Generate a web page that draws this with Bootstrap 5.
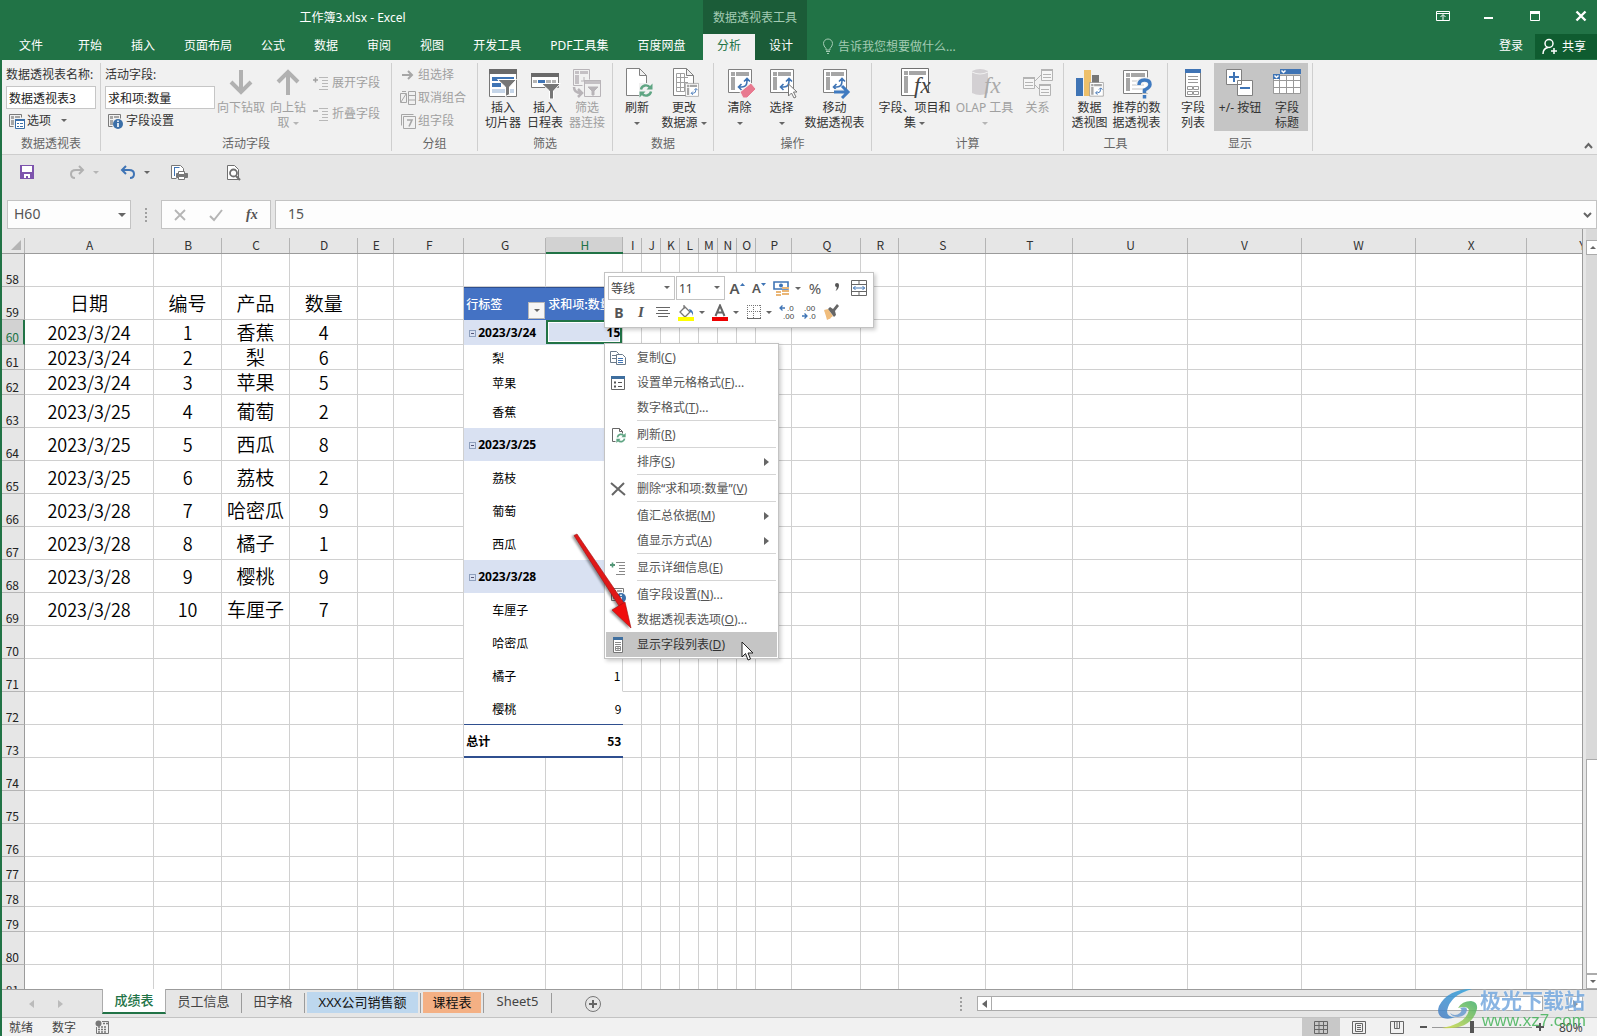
<!DOCTYPE html>
<html lang="zh-CN">
<head>
<meta charset="utf-8">
<meta name="viewport" content="width=device-width, initial-scale=1">
<title>工作簿3.xlsx - Excel</title>
<link href="https://cdn.jsdelivr.net/npm/bootstrap@5.3.0/dist/css/bootstrap.min.css" rel="stylesheet">
<style>
:root{--green:#217346;--dark:#1b5c38;--bar:#e6e6e6;--ribbon:#f1f1f1;--line:#d0d0d0}
body{font-family:"Noto Sans","Noto Sans CJK SC",sans-serif;font-size:12px;line-height:15px;color:#444;background:var(--bar)}
button{font:inherit;color:inherit;border:0;background:none;padding:0}
svg{display:block;flex:none}
.app{height:100vh;border-left:2px solid var(--green);overflow:hidden}
.caret{display:inline-block;border:3px solid transparent;border-top-color:#666;border-bottom:0;flex:none;vertical-align:middle}
/* title bar and ribbon tabs */
.topbar{height:60px;background:var(--green);color:#fff}
.title-row{height:34px}
.tab-row{height:26px}
.rtab{color:#fff;text-decoration:none;padding:4px 15px 0 14px;display:block;white-space:nowrap}
.rtab.file{padding:4px 21px 0 17px}
.main-tabs{width:701px}
.tool-tabs{width:104px;background:var(--dark)}
.tool-tabs .title-row{color:#a3cbb3}
.tool-tabs .rtab{padding:4px 0 0;flex:1;text-align:center}
.tool-tabs .rtab.active{background:var(--ribbon);color:var(--green)}
.tell{color:#a3cbb3;padding-left:15px}
.win{gap:14px}
.win button{width:32px;height:32px}
.share{background:#0f5c30;height:25px;width:62px;gap:4px;padding-left:7px;align-self:flex-start}
/* ribbon */
.ribbon{height:95px;background:var(--ribbon);border-bottom:1px solid #cdcdcd;padding-top:3px}
.grp{position:relative;height:88px;border-right:1px solid #cfcfcf;background-clip:padding-box}
.grp-body{height:68px}
.grp-name{height:20px;padding-top:5px;text-align:center;color:#666}
.big{height:68px;padding-top:3px;line-height:15px;white-space:nowrap;color:#333;text-align:center;flex:none}
.big svg{margin:0 auto 1px}
.big.off,.sml.off{color:#a0a0a0}
.off .caret{border-top-color:#b5b5b5}
.big.on{background:#c5c5c5}
.w42{width:42px}.w52{width:52px}.w64{width:64px}.w76{width:76px}
.sml{display:flex;align-items:center;gap:2px;height:23px;white-space:nowrap;color:#333}
.rb-in{height:23px;border:1px solid #c6c6c6;background:#fff;font-size:12px;padding:0 2px;margin-top:1px;color:#222;display:block}
.rb-name{width:90px}.rb-field{width:110px}
.rb-lab{height:22px;display:flex;align-items:center;white-space:nowrap;color:#333}
.rb-opt{padding-left:2px}
.g1{width:99px}.g2{width:291px}.g3{width:86px}.g4{width:135px}.g5{width:101px}.g6{width:158px}.g7{width:192px}.g8{width:104px}.g9{width:145px}
/* quick access and formula bar */
.qat{height:45px;padding:0 0 11px 17px}
.gap-a{margin-right:34px}.gap-b{margin-right:21px}.gap-c{margin-right:38px}
.fbar{height:29px}
.fbox{height:29px;background:#fdfdfd;border:1px solid #c3c3c3}
.fbox input{border:0;background:none;font-size:14px;line-height:20px;color:#555;min-width:0;padding:0 0 1px;outline:0}
.namebox{width:124px;margin-left:5px;padding:0 4px 0 6px}
.fxbox{width:110px;margin-left:14px}
.dots{width:2px;height:14px;margin-left:14px;background:repeating-linear-gradient(#a0a0a0 0 2px,transparent 2px 4px)}
/* worksheet */
.sheet{border-right:1px solid #9b9b9b;overflow:hidden;background:#fff;min-width:0}
.grid{table-layout:fixed;border-collapse:separate;border-spacing:0;width:1636px;color:#000;font-family:"Noto Sans CJK SC",sans-serif}
.grid th,.grid td{padding:0;white-space:nowrap;font-weight:400}
.grid thead th{height:25px;padding-top:8px;text-align:center;color:#333;border-bottom:1px solid #9b9b9b;background:linear-gradient(#b4b4b4,#b4b4b4) right bottom/1px 15px no-repeat var(--bar);line-height:14px}
.grid thead th.sel{background:linear-gradient(#b4b4b4,#b4b4b4) right bottom/1px 15px no-repeat,linear-gradient(#d2d2d2,#d2d2d2) right bottom/100% 15px no-repeat var(--bar);color:var(--green);border-bottom:2px solid var(--green)}
.grid thead th:first-child{padding:0 4px 3px 0;vertical-align:bottom}
.grid tbody th{background:var(--bar);border-right:1px solid #9b9b9b;border-bottom:1px solid #b4b4b4;vertical-align:bottom;text-align:right;padding-right:5px;line-height:14px;color:#222}
.grid tbody th.sel{background:#d2d2d2;color:var(--green);border-right:2px solid var(--green);padding-right:4px}
.grid td{border-right:1px solid var(--line);border-bottom:1px solid var(--line);text-align:center;vertical-align:middle;line-height:24px;font-size:18px;font-weight:350}
.h33{height:33px}.h25{height:25px}
.grid td.zh{font-size:19px}
.grid td.pv{font-size:12px;line-height:15px;border-color:#fff;text-align:left;font-weight:400}
.grid td.pv.rt{text-align:right;padding-right:2px;border-right-color:var(--line)}
.grid td.item{padding-left:28px}
.grid td.sum{background:#d9e1f2;border-bottom-color:#d9e1f2;border-right-color:#d9e1f2;font-weight:700;font-family:"Noto Sans","Noto Sans CJK SC",sans-serif;padding-left:5px}
.grid td.tot{border-bottom:2px solid #2f4f8f;border-right:0;padding-left:2px;font-weight:700}
.grid td.pretot{border-bottom-color:#2f4f8f;border-right:0}
.grid td.hd{background:#4472c4;border-color:#4472c4;border-top:1px solid #2f4f8f;color:#fff;padding-left:2px;font-weight:500;position:relative}
.grid td.pick{box-shadow:inset 0 0 0 2px var(--green),inset 0 0 0 3px #fff}
.exp{display:inline-block;width:7px;height:7px;border:1px solid #8fa0bd;background:linear-gradient(#557,#557) center/3px 1px no-repeat;margin-right:2px}
.drop{position:absolute;right:0;bottom:0;width:17px;height:17px;background:#f6f6f6;border:1px solid #b8b8b8;display:flex;align-items:center;justify-content:center}
/* scroll bars */
.vscroll{width:14px;padding:11px 0 0 3px;background:linear-gradient(90deg,var(--bar) 3px,#d9d9d9 3px)}
.sb{background:#fff;border:1px solid #ababab;display:flex;align-items:center;justify-content:center;flex:none}
.vscroll .sb{height:15px;margin-right:-3px}
.vscroll .vthumb{height:215px}
.up,.left{transform:rotate(180deg)}
/* mini toolbar and context menu */
.float-box{position:absolute;left:602px;background:#fff;border:1px solid #c3c3c3;box-shadow:2px 2px 4px rgba(0,0,0,.2)}
.mini{top:43px;width:270px;height:56px;padding:3px}
.mini button{width:22px;height:24px;display:flex;align-items:center;justify-content:center;font-size:15px;color:#555}
.mini button.split{width:34px;gap:5px}
.combo{position:relative;height:24px}
.combo select{appearance:none;width:100%;height:24px;border:1px solid #c3c3c3;background:#fff;font-size:12px;color:#444;padding:0 2px;border-radius:0;display:block}
.combo .caret{position:absolute;right:5px;top:10px;pointer-events:none}
.c-font{width:67px;margin-right:1px}.c-size{width:49px;margin-right:1px}
.i-bold{font-size:14px}
.i-ital{font:italic 700 15px "Liberation Serif",serif}
.ctx{top:114px;width:175px;padding:1px}
.ctx button{display:flex;align-items:center;width:100%;height:25px;padding:0 8px 0 4px;color:#555;text-align:left;white-space:nowrap}
.ctx button svg,.ctx .noico{width:16px;height:16px;margin-right:11px;flex:none}
.ctx button.hot{background:#c5c5c5;color:#333}
.ctx hr{margin:0 1px 1px 31px;border:0;border-top:1px solid #d5d5d5;opacity:1}
.sub{border:4px solid transparent;border-left:5px solid #666;border-right:0;margin-left:auto}
.sub.dim{border-left-color:#bbb}
.pointer{position:absolute;left:568px;top:301px}
.mouse{position:absolute;left:739px;top:412px}
/* sheet tabs and status bar */
.tabs{height:28px;border-top:1px solid #9b9b9b}
.tabs-nav{width:100px;padding-left:27px}
.stab{font-size:13px;height:23px;display:flex;align-items:center;justify-content:center;text-decoration:none;color:#444;white-space:nowrap;flex:none}
.stab.active{background:#fff;color:var(--green);border:1px solid #ababab;border-top:0;border-bottom:2px solid var(--green);height:25px;margin-top:-1px;width:64px;font-weight:500}
.sepr{width:1px;height:20px;background:#9b9b9b;margin-top:3px;flex:none}
.t1{width:75px}.t2{width:62px}.t3{width:111px;background:#bdd7ee;color:#111;margin:2px 2px 0;height:21px}.t4{width:58px;background:#f4b084;color:#111;margin:2px 2px 0;height:21px}.t5{width:67px}
.tabs .dots{margin-top:7px}
.hsb{height:15px;margin:6px 14px 0 15px;width:38%}
.hsb button{width:15px}
.hthumb{margin-right:25px}
.stat{height:19px;background:var(--ribbon);border-top:1px solid #c3c3c3;padding-left:7px;gap:19px}
.vw{width:38px;height:19px;display:flex;align-items:center;justify-content:center}
.vw.on{background:#c8c8c8}
.zoomer{appearance:none;width:100px;height:14px;background:linear-gradient(#999,#999) center/100% 1px no-repeat;margin:0 4px}
.zoomer::-webkit-slider-thumb{appearance:none;width:4px;height:12px;background:#555}
.zoomer::-moz-range-thumb{width:4px;height:12px;background:#555;border:0;border-radius:0}
.pct{width:53px;padding-left:15px}
.brand{position:absolute;right:11px;bottom:7px;pointer-events:none;opacity:.85}
.brand-cn{font-size:21px;line-height:24px;font-weight:700;color:#76a9df;white-space:nowrap;text-shadow:0 0 2px #fff}
.brand-url{font:17px/17px "Liberation Sans",sans-serif;color:#45b35a;padding-left:2px}
</style>
</head>
<body>
<svg width="0" height="0" class="position-absolute" aria-hidden="true">
 <defs>
  <symbol id="pv" viewBox="0 0 32 32"><path fill="#fff" stroke="#808080" d="M4.500 2.500h23v23h-23z"/><path fill="#a6a6a6" d="M7 5h4v4H7zM12 5h13v4H12zM7 10h4v13H7z"/><path fill="none" stroke="#3f74b5" stroke-width="1.600" d="M15 20h3q5 0 5-6v-2M17.500 17l-3 3 3 3M20 14.500l3-3 3 3"/></symbol>
  <symbol id="refr" viewBox="0 0 14 14"><path fill="none" stroke="#5fa583" stroke-width="2.400" d="M2 6a5 5 0 0 1 9-2M12 8a5 5 0 0 1-9 2"/><path fill="#5fa583" d="M13.500 0v6h-6zM.5 14V8h6z"/></symbol>
  <symbol id="info" viewBox="0 0 16 16"><path fill="none" stroke="#7a7a7a" d="M1.500 13.500v-12h12v4M1.500 13.500h4"/><path fill="#a6a6a6" d="M3 3h3v3H3zM7 3h5v2H7zM3 7h3v5H3z"/><circle cx="11" cy="11" r="5" fill="#3b6fa8"/><path stroke="#fff" stroke-width="1.600" d="M11 7.500v1.500M11 10v4"/></symbol>
  <symbol id="exp" viewBox="0 0 16 16"><path stroke="currentColor" d="M6 2.500h9M9 5.500h6M9 8.500h6M9 11.500h6M6 14.500h9" fill="none" opacity=".7"/><path stroke="currentColor" stroke-width="1.500" d="M0 5h5"/></symbol>
  <symbol id="flist" viewBox="0 0 16 28"><path fill="#fff" stroke="#808080" d="M.5.5h15v27H.5z"/><path fill="#3f74b5" d="M0 0h16v4H0z"/><path stroke="#999" fill="none" d="M3 7.500h10M3 10.500h10M3 13.500h10M2.500 17.500h5v3h-5zM8.500 17.500h5v3h-5zM2.500 22.500h5v3h-5zM8.500 22.500h5v3h-5z"/></symbol>
 </defs>
</svg>
<div class="app d-flex flex-column position-relative">
 <header class="topbar d-flex flex-shrink-0">
  <div class="main-tabs flex-shrink-0">
   <div class="title-row d-flex align-items-center justify-content-center">工作簿3.xlsx - Excel</div>
   <nav class="tab-row d-flex"><a class="rtab file" href="#">文件</a><a class="rtab" href="#">开始</a><a class="rtab" href="#">插入</a><a class="rtab" href="#">页面布局</a><a class="rtab" href="#">公式</a><a class="rtab" href="#">数据</a><a class="rtab" href="#">审阅</a><a class="rtab" href="#">视图</a><a class="rtab" href="#">开发工具</a><a class="rtab" href="#">PDF工具集</a><a class="rtab" href="#">百度网盘</a></nav>
  </div>
  <div class="tool-tabs flex-shrink-0">
   <div class="title-row d-flex align-items-center justify-content-center">数据透视表工具</div>
   <nav class="tab-row d-flex"><a class="rtab active" href="#">分析</a><a class="rtab" href="#">设计</a></nav>
  </div>
  <div class="flex-grow-1">
   <div class="title-row win d-flex justify-content-end">
    <button aria-label="功能区显示选项"><svg width="32" height="32"><path fill="none" stroke="#fff" d="M9.500 11.500h13v9h-13zM9.500 13.500h13M16 20v-5M13.500 17l2.500-2.500 2.500 2.500"/></svg></button>
    <button aria-label="最小化"><svg width="32" height="32"><path fill="#fff" d="M11 17h9v2h-9z"/></svg></button>
    <button aria-label="最大化"><svg width="32" height="32"><path fill="none" stroke="#fff" d="M11.500 11.500h9v9h-9z"/><path fill="#fff" d="M11 11h10v3H11z"/></svg></button>
    <button aria-label="关闭"><svg width="32" height="32"><path stroke="#fff" stroke-width="2.400" d="M11.500 11.500l9 9M20.500 11.500l-9 9"/></svg></button>
   </div>
   <div class="tab-row d-flex align-items-start">
    <button class="tell d-flex align-items-center gap-1 pt-1"><svg width="12" height="16" fill="none" stroke="#a3cbb3"><path d="M4 10.500Q1.500 8 1.500 5.500a4.500 4.500 0 0 1 9 0Q10.500 8 8 10.500V12H4zM4 13.500h4M5 15.500h2"/></svg>告诉我您想要做什么...</button>
    <a class="ms-auto me-2 pe-1 pt-1 text-white text-decoration-none" href="#">登录</a>
    <button class="share d-flex align-items-center text-white"><svg width="16" height="17" fill="none" stroke="#fff" stroke-width="1.500"><circle cx="7" cy="5.500" r="4"/><path d="M1 16q0-5.500 5-6.500M9 13h6M12 10v6"/></svg>共享</button>
   </div>
  </div>
 </header>

 <section class="ribbon d-flex flex-shrink-0">
  <div class="grp g1"><div class="grp-body ps-1"><label class="rb-lab" for="ptn">数据透视表名称:</label><input id="ptn" class="rb-in rb-name" value="数据透视表3">
   <button class="sml rb-opt"><svg width="17" height="16"><path fill="none" stroke="#7a7a7a" d="M1.500 13.500v-12h12v3M1.500 13.500h4"/><path fill="#a6a6a6" d="M3 3h3v3H3zM7 3h5v2H7zM3 7h3v5H3z"/><path fill="#fff" stroke="#3b6fa8" d="M7.500 6.500h9v9h-9z"/><path fill="#3b6fa8" d="M7 6h10v2H7zM9 10h2v1H9zM12 10h3v1h-3zM9 13h2v1H9zM12 13h3v1h-3z"/></svg>选项<span class="caret ms-2"></span></button></div><div class="grp-name">数据透视表</div></div>
  <div class="grp g2"><div class="grp-body d-flex ps-1"><div><label class="rb-lab" for="afd">活动字段:</label><input id="afd" class="rb-in rb-field" value="求和项:数量"><button class="sml rb-opt"><svg width="17" height="16"><use href="#info" width="16" height="16"/></svg>字段设置</button></div>
   <button class="big off w52"><svg width="32" height="32"><path fill="none" stroke="#b1b1b1" stroke-width="4" d="M16 3v22M6 15l10 10 10-10"/></svg>向下钻取<br>&nbsp;</button>
   <button class="big off w42"><svg width="32" height="32"><path fill="none" stroke="#b1b1b1" stroke-width="4" d="M16 28V5M6 15L16 5l10 10"/></svg>向上钻<br>取 <span class="caret"></span></button>
   <div class="d-flex flex-column ps-1 pt-2 gap-2"><button class="sml off"><svg width="17" height="16"><use href="#exp" width="16" height="16"/><path stroke="#a0a0a0" stroke-width="1.500" d="M2.500 2.500v5"/></svg>展开字段</button><button class="sml off"><svg width="17" height="16"><use href="#exp" width="16" height="16"/></svg>折叠字段</button></div></div><div class="grp-name">活动字段</div></div>
  <div class="grp g3"><div class="grp-body ps-2">
   <button class="sml off"><svg width="16" height="16"><path fill="none" stroke="#a6a6a6" stroke-width="2" d="M2 8h10M8 4l4 4-4 4"/></svg>组选择</button>
   <button class="sml off"><svg width="16" height="16" fill="none" stroke="#a6a6a6"><path d="M.5 3.500h6v9h-6zM1 12l5-8M8.500 1.500h7v13h-7zM8.500 5.500h7M8.500 10h7M2 1.500h4"/></svg>取消组合</button>
   <button class="sml off"><svg width="16" height="16" fill="none" stroke="#a6a6a6"><path d="M3.500 3.500h12v12h-12zM1.500 12.500v-11h12"/><path stroke-width="1.600" d="M7 7h5l-3 6.500"/></svg>组字段</button></div><div class="grp-name">分组</div></div>
  <div class="grp g4"><div class="grp-body d-flex justify-content-center">
   <button class="big w42"><svg width="32" height="32"><path fill="#fff" stroke="#777" d="M2.500 2.500h27v27h-27z"/><path fill="#6a6a6a" d="M2 2h28v5H2z"/><path fill="#3f74b5" d="M5 10h22v4H5zM5 16h9v4H5z"/><path fill="#c5d5e8" d="M5 22h22v4H5z"/><path fill="#777" stroke="#fff" d="M10.500 12.500h19l-7 7.500v7.500l-4 2V20z"/></svg>插入<br>切片器</button>
   <button class="big w42"><svg width="32" height="32"><path fill="#fff" stroke="#777" d="M2.500 6.500h27v14h-27z"/><path fill="#6a6a6a" d="M2 6h28v4H2z"/><path fill="#3f74b5" d="M9 13h7v3H9z"/><path fill="#b5b5b5" d="M4 13h4v3H4zM17 13h5v3h-5zM23 13h4v3h-4z"/><path fill="#777" stroke="#fff" d="M12.500 16.500h19l-7 7.500v8h-4v-8z"/></svg>插入<br>日程表</button>
   <button class="big off w42"><svg width="32" height="32" fill="none" stroke="#b8b4b8"><path d="M2.500 2.500h16v10M2.500 2.500v16h9"/><path fill="#c4c0c4" stroke="none" d="M4 4h4v3H4zM9 4h8v3H9zM4 8h4v9H4zM13 13h17v4H13z"/><path d="M13.500 13.500h16v16h-16zM10 14h3v-4"/><path stroke-width="2.500" d="M3 20q0 6 7 6M7 22l4 4-4 4"/><path fill="#b8b4b8" d="M17 20h10l-4 4v4h-2v-4z"/></svg>筛选<br>器连接</button></div><div class="grp-name">筛选</div></div>
  <div class="grp g5"><div class="grp-body d-flex justify-content-center">
   <button class="big w42"><svg width="32" height="32"><path fill="#fff" stroke="#808080" d="M5.500 1.500h13l7 7v20h-20zM18.500 1.500v7h7"/><path fill="#f1f1f1" d="M18 16h14v14H18z"/><use href="#refr" x="18" y="16" width="14" height="15"/></svg>刷新<br><span class="caret"></span></button>
   <button class="big w52"><svg width="32" height="32"><path fill="#fff" stroke="#808080" d="M5.500 1.500h13l7 7v20h-20zM18.500 1.500v7h7"/><path fill="none" stroke="#a0a0a0" d="M8.500 6.500h8v18h-8zM12.500 6v18M8 10.500h12M8 15.500h12M8 20.500h9"/><use href="#pv" x="15" y="15" width="18" height="18"/></svg>更改<br>数据源 <span class="caret"></span></button></div><div class="grp-name">数据</div></div>
  <div class="grp g6"><div class="grp-body d-flex justify-content-center">
   <button class="big w42"><svg width="32" height="32"><use href="#pv" width="32" height="32"/><path fill="#e8798f" stroke="#f1f1f1" d="M16 25l11-9 5 6-9 9h-4z"/></svg>清除<br><span class="caret"></span></button>
   <button class="big w42"><svg width="32" height="32"><use href="#pv" width="32" height="32"/><path fill="#fff" stroke="#777" d="M22.500 17v12l3-3 2.500 5 2-1-2.500-5h3.500z"/></svg>选择<br><span class="caret"></span></button>
   <button class="big w64"><svg width="32" height="32"><use href="#pv" width="32" height="32"/><path stroke="#f1f1f1" stroke-width="6" fill="none" d="M15 25h15"/><path stroke="#3f7ac0" stroke-width="3" fill="none" d="M15 25h14M23 19l6 6-6 6"/></svg>移动<br>数据透视表</button></div><div class="grp-name">操作</div></div>
  <div class="grp g7"><div class="grp-body d-flex justify-content-center">
   <button class="big w76"><svg width="32" height="32"><path fill="#fff" stroke="#707070" d="M2.500 1.500h27v27h-27z"/><path fill="#a6a6a6" d="M5 4h4v4H5zM10 4h17v4H10zM5 9h4v17H5z"/><path fill="#f1f1f1" d="M17 26h15v6H17z"/><text x="15" y="26" font-family="Liberation Serif" font-style="italic" font-size="23" fill="#444">fx</text></svg>字段、项目和<br>集 <span class="caret"></span></button>
   <button class="big off w64"><svg width="32" height="32"><path fill="#d3d0d3" d="M3 4q8-4 16 0v22q-8 4-16 0z"/><path fill="none" stroke="#f1f1f1" d="M3 5q8 4 16 0"/><text x="15" y="26" font-family="Liberation Serif" font-style="italic" font-size="23" fill="#aaa">fx</text></svg>OLAP 工具<br><span class="caret"></span></button>
   <button class="big off w42"><svg width="32" height="32" fill="none" stroke="#b4b4b4"><path d="M12 15l8-8M12 17l6 6"/><path fill="#f6f6f6" d="M1.500 10.500h11v11h-11zM19.500 2.500h11v11h-11zM17.500 17.500h11v11h-11z"/><path stroke-width="2" d="M1 11h12M19 3h12M17 18h12"/><path d="M3 15.500h8M3 18.500h8M21 7.500h8M21 10.500h8M19 22.500h8M19 25.500h8"/></svg>关系<br>&nbsp;</button></div><div class="grp-name">计算</div></div>
  <div class="grp g8"><div class="grp-body d-flex justify-content-center">
   <button class="big w42"><svg width="32" height="32"><path fill="#3f74b5" d="M2 11h7v18H2z"/><path fill="#eec06a" d="M10 3h7v26h-7z"/><path fill="#777" d="M18 8h7v21h-7z"/><use href="#pv" x="13" y="14" width="19" height="19"/></svg>数据<br>透视图</button>
   <button class="big w52"><svg width="32" height="32"><path fill="#fff" stroke="#808080" d="M2.500 3.500h24v23h-24z"/><path fill="#a6a6a6" d="M5 6h4v4H5zM10 6h14v4H10zM5 11h4v13H5z"/><path stroke="#c5c5c5" d="M11 14h12M11 18h12M11 22h12"/><path fill="none" stroke="#f1f1f1" stroke-width="6" d="M18 18q0-5 5.500-5t5.500 4.500q0 3-5 7v2"/><path fill="none" stroke="#3f7ac0" stroke-width="3.500" d="M18 18q0-5 5.500-5t5.500 4.500q0 3-5.500 5.500v3M23.500 28v3.500"/></svg>推荐的数<br>据透视表</button></div><div class="grp-name">工具</div></div>
  <div class="grp g9"><div class="grp-body d-flex justify-content-center">
   <button class="big w42"><svg width="32" height="32"><use href="#flist" x="8" y="2" width="16" height="28"/></svg>字段<br>列表</button>
   <button class="big on w52"><svg width="32" height="32"><path fill="#fff" stroke="#808080" d="M2.500 2.500h15v15h-15zM13.500 13.500h15v15h-15z"/><path stroke="#3f74b5" stroke-width="2" d="M5 10h10M10 5v10M16 21h10"/></svg>+/- 按钮<br>&nbsp;</button>
   <button class="big on w42"><svg width="32" height="32"><path fill="#fff" stroke="#999" d="M2.500 8.500h27v18h-27zM8.500 8v18M15.500 8v18M22.500 8v18M2 13.500h27M2 20.500h27"/><path fill="#3f74b5" d="M9 2h21v5H9zM2 7h7v5H2z"/><path fill="none" stroke="#fff" stroke-width="1.500" d="M10.500 3.500l2 2 2-2M3.500 8.500l2 2 2-2"/></svg>字段<br>标题</button></div><div class="grp-name">显示</div></div>
  <button class="ms-auto align-self-end pe-1 pb-1" aria-label="折叠功能区"><svg width="9" height="8"><path fill="none" stroke="#666" stroke-width="2" d="M1 6l3.500-4L8 6"/></svg></button>
 </section>

 <div class="qat d-flex align-items-center flex-shrink-0">
  <button class="gap-a" aria-label="保存"><svg width="16" height="16"><path fill="#7d54ad" d="M1 1h14v14H1z"/><path fill="#fff" d="M3 2h10v6H3zM5 10h6v4H9v-2H7v2H5z"/></svg></button>
  <button class="d-flex align-items-center off gap-2 gap-b" aria-label="恢复"><svg width="16" height="14"><path fill="none" stroke="#b1b1b1" stroke-width="2" d="M14 5H7Q2 5 2 9t4 4M10 1l4 4-4 4"/></svg><span class="caret"></span></button>
  <button class="d-flex align-items-center gap-2 gap-b" aria-label="撤消"><svg width="16" height="14"><path fill="none" stroke="#3f74b5" stroke-width="2" d="M2 5h7q5 0 5 4t-4 4M6 1L2 5l4 4"/></svg><span class="caret"></span></button>
  <button class="gap-c" aria-label="打印"><svg width="17" height="17" fill="#fff" stroke="#777"><path d="M5.500 14.500h-5v-13h9l3 3v3"/><path stroke="#3f74b5" fill="none" d="M3.500 3v9M3.500 3.500h5"/><path fill="#777" d="M5.500 9.500h11v4h-11z"/><path d="M7.500 7.500h6v3h-6zM7.500 12.500h6v3h-6z"/></svg></button>
  <button aria-label="打印预览"><svg width="15" height="17" fill="none" stroke="#707070"><path fill="#fff" d="M1.500 1.500h7l4 4v10h-11z"/><circle cx="7.500" cy="9" r="3.500" stroke-width="1.800"/><path stroke-width="2.200" d="M10 12l4 4"/></svg></button>
 </div>

 <div class="fbar d-flex align-items-center flex-shrink-0">
  <div class="fbox namebox d-flex align-items-center"><input aria-label="名称框" class="flex-grow-1" value="H60"><svg width="8" height="4"><path fill="#666" d="M0 0h8L4 4z"/></svg></div>
  <span class="dots"></span>
  <div class="fbox fxbox d-flex align-items-center justify-content-around">
   <button aria-label="取消"><svg width="14" height="14"><path stroke="#b5b5b5" stroke-width="1.800" d="M2 2l10 10M12 2L2 12"/></svg></button>
   <button aria-label="输入"><svg width="14" height="14"><path fill="none" stroke="#b5b5b5" stroke-width="2" d="M1 8l4 4 8-10"/></svg></button>
   <button aria-label="插入函数"><svg width="14" height="16"><text x="1" y="12" font-family="Liberation Serif" font-style="italic" font-weight="700" font-size="14" fill="#555">fx</text></svg></button>
  </div>
  <div class="fbox flex-grow-1 ms-1 ps-2 pe-1 d-flex align-items-center"><input aria-label="编辑栏" class="flex-grow-1 ms-1" value="15"><svg width="9" height="8"><path fill="none" stroke="#666" stroke-width="2" d="M1 2l3.500 3.500L8 2"/></svg></div>
 </div>

 <main class="d-flex flex-grow-1 position-relative overflow-hidden">
  <div class="sheet flex-grow-1"><table class="grid" id="grid"></table></div>
  <div class="vscroll d-flex flex-column flex-shrink-0">
   <button class="sb" aria-label="向上滚动"><span class="caret up"></span></button>
   <div class="sb vthumb mt-auto"></div>
   <button class="sb" aria-label="向下滚动"><span class="caret"></span></button>
  </div>

  <div class="float-box mini">
   <div class="d-flex">
    <div class="combo c-font"><select aria-label="字体"><option>等线</option></select><span class="caret"></span></div>
    <div class="combo c-size"><select aria-label="字号"><option>11</option></select><span class="caret"></span></div>
    <button aria-label="增大字号"><span class="fw-semibold">A</span><svg width="5" height="12"><path fill="#3f74b5" d="M0 4l2.500-3L5 4z"/></svg></button>
    <button aria-label="减小字号"><small class="fw-semibold">A</small><svg width="5" height="12"><path fill="#3f74b5" d="M0 1h5L2.500 4z"/></svg></button>
    <button class="split" aria-label="会计数字格式"><svg width="17" height="17"><path fill="#fff" stroke="#3f74b5" stroke-width="1.600" d="M1 2h14v7H1z"/><circle cx="8" cy="5.500" r="2" fill="#3f74b5"/><path stroke="#eab676" stroke-width="2" d="M9 8h7M9 11h7M9 14h7M3 12h5M3 15h5"/></svg><span class="caret"></span></button>
    <button aria-label="百分比样式">%</button>
    <button aria-label="千位分隔样式"><svg width="6" height="12"><path fill="#555" d="M1 3a2 2 0 0 1 4 0q0 4-3.500 6 1.500-2 1.200-4Q1 5 1 3z"/></svg></button>
    <button aria-label="合并后居中"><svg width="16" height="16" fill="none" stroke="#666"><path d="M.5.500h15v15H.5zM0 4.500h16M0 11.500h16M8 0v4M8 12v4"/><path stroke="#3f74b5" d="M2 8h12M4.500 6L2.500 8l2 2M11.500 6l2 2-2 2"/></svg></button>
   </div>
   <div class="d-flex">
    <button aria-label="加粗"><b class="i-bold">B</b></button>
    <button aria-label="倾斜"><span class="i-ital">I</span></button>
    <button aria-label="居中"><svg width="14" height="13"><path stroke="#666" d="M0 1.500h14M2 4.500h10M0 7.500h14M2 10.500h10"/></svg></button>
    <button class="split" aria-label="填充颜色"><svg width="16" height="17"><path fill="#fff" stroke="#777" stroke-width="1.300" d="M7 3l5 5-5 5-5-5zM6 5V1"/><path fill="#3f74b5" d="M11 5q5 1 4 7-1-4-3-4z"/><path fill="#ff0" d="M0 13h16v4H0z"/></svg><span class="caret"></span></button>
    <button class="split" aria-label="字体颜色"><svg width="16" height="17"><path fill="none" stroke="#666" stroke-width="2" d="M3.500 12L8 1.500 12.500 12M5 8.500h6"/><path fill="#e00" d="M0 13h16v4H0z"/></svg><span class="caret"></span></button>
    <button class="split" aria-label="边框"><svg width="14" height="14"><path fill="none" stroke="#777" stroke-dasharray="1 1" d="M.5 0v13M6.500 0v13M13.500 0v13M0 .5h14M0 6.500h14"/><path stroke="#666" d="M0 13.500h14"/></svg><span class="caret"></span></button>
    <button aria-label="增加小数位数"><svg width="16" height="16" font-size="8" font-family="Liberation Sans" fill="#444"><path fill="none" stroke="#3f74b5" stroke-width="1.300" d="M1 4h5M3.500 1.500L1 4l2.500 2.500"/><text x="8" y="7">.0</text><text x="4" y="15">.00</text></svg></button>
    <button aria-label="减少小数位数"><svg width="16" height="16" font-size="8" font-family="Liberation Sans" fill="#444"><text x="3" y="7">.00</text><path fill="none" stroke="#3f74b5" stroke-width="1.300" d="M1 12h5M3.500 9.500L6 12l-2.500 2.500"/><text x="8" y="15">.0</text></svg></button>
    <button aria-label="格式刷"><svg width="16" height="16"><path fill="#f0bd7c" d="M1 6l7 8-4 2Q3 12 1 6z"/><path fill="#f0bd7c" d="M1 6l4-1 5 7-4 3z"/><path fill="#666" d="M5 5l2-2 3 2 4-5 2 2-4 5 1 4-2 2z"/></svg></button>
   </div>
  </div>

  <div class="float-box ctx" role="menu">
   <button role="menuitem"><svg fill="#fff" stroke="#6a7a8a"><path d="M.5 1.500h6l2 2v9h-8zM2 5.500h4M2 8.500h4"/><path d="M6.500 4.500h6l3 3v7h-9z"/><path stroke="#3f74b5" d="M8 8.500h5M8 10.500h5M8 12.500h5"/></svg><span>复制(<u>C</u>)</span></button>
   <button role="menuitem"><svg><path fill="#fff" stroke="#666" d="M1.500 1.500h13v13h-13z"/><path fill="#3f6f9f" d="M1 1h14v3H1z"/><path stroke="#555" stroke-width="2" d="M4 7.500h2M4 11.500h2"/><path stroke="#555" d="M8 7.500h4M8 11.500h4"/></svg><span>设置单元格格式(<u>F</u>)...</span></button>
   <button role="menuitem"><span class="noico"></span><span>数字格式(<u>T</u>)...</span></button><hr>
   <button role="menuitem"><svg><path fill="#fff" stroke="#666" d="M2.500 14.500v-13h7l3 3v2M2.500 14.500h3M9.500 1.500v3h3"/><use href="#refr" x="6" y="6" width="10" height="10"/></svg><span>刷新(<u>R</u>)</span></button><hr>
   <button role="menuitem"><span class="noico"></span><span>排序(<u>S</u>)</span><span class="sub"></span></button><hr>
   <button role="menuitem"><svg><path stroke="#666" stroke-width="2" d="M1 2l14 12M14 2L2 14"/></svg><span>删除“求和项:数量”(<u>V</u>)</span></button><hr>
   <button role="menuitem"><span class="noico"></span><span>值汇总依据(<u>M</u>)</span><span class="sub"></span></button>
   <button role="menuitem"><span class="noico"></span><span>值显示方式(<u>A</u>)</span><span class="sub"></span></button><hr>
   <button role="menuitem"><svg><use href="#exp" width="16" height="16"/><path stroke="#4f9a77" stroke-width="1.600" d="M2.500 2.500v5M0 5h5"/></svg><span>显示详细信息(<u>E</u>)</span></button><hr>
   <button role="menuitem"><svg><use href="#info" width="16" height="16"/></svg><span>值字段设置(<u>N</u>)...</span></button>
   <button role="menuitem"><span class="noico"></span><span>数据透视表选项(<u>O</u>)...</span></button>
   <button role="menuitem" class="hot"><svg><path fill="#fff" stroke="#777" d="M3.500.500h9v15h-9z"/><path fill="#3f6f9f" d="M3 0h10v3H3z"/><path stroke="#888" fill="none" d="M5 5.500h6M5 7.500h6M5.500 9.500h5v4h-5zM8 9v5M5 11.500h6"/></svg><span>显示字段列表(<u>D</u>)</span></button>
  </div>
  <svg class="pointer" width="70" height="104"><g style="filter:drop-shadow(-2px 1px 1px rgba(0,0,0,.4))"><path fill="#e01818" stroke="#a01010" stroke-width=".6" d="M4 5.500l3-1.500L54 73l-5 3z"/><path fill="#f00d0d" stroke="#a01010" stroke-width=".6" d="M42 80l13-8 6 26z"/></g></svg>
  <svg class="mouse" width="14" height="21"><path fill="#fff" stroke="#222" d="M1 1v15l3.500-3.500L7 19l2.500-1L7 12h5z"/></svg>
 </main>

 <div class="tabs d-flex flex-shrink-0">
  <div class="tabs-nav d-flex align-items-center gap-4"><span class="sub dim left ms-0"></span><span class="sub dim ms-0"></span></div>
  <a class="stab active" href="#">成绩表</a><a class="stab t1" href="#">员工信息</a><span class="sepr"></span><a class="stab t2" href="#">田字格</a><span class="sepr"></span><a class="stab t3" href="#">XXX公司销售额</a><span class="sepr"></span><a class="stab t4" href="#">课程表</a><span class="sepr"></span><a class="stab t5" href="#">Sheet5</a><span class="sepr"></span>
  <button class="ms-4 ps-2" aria-label="新工作表"><svg width="18" height="18"><circle cx="9" cy="9" r="7.500" fill="none" stroke="#777"/><path stroke="#666" stroke-width="2" d="M5 9h8M9 5v8"/></svg></button>
  <span class="dots ms-auto"></span>
  <div class="hsb d-flex"><button class="sb" aria-label="向左滚动"><span class="sub left ms-0"></span></button><div class="sb hthumb flex-fill border-start-0"></div><button class="sb" aria-label="向右滚动"><span class="sub ms-0"></span></button></div>
 </div>
 <footer class="stat d-flex align-items-center flex-shrink-0">
  <span>就绪</span><span>数字</span>
  <svg width="14" height="14"><circle cx="3.500" cy="3.500" r="3" fill="#777"/><path fill="none" stroke="#777" d="M7 1.500h6.500v12h-12V7"/><path stroke="#777" stroke-width="1.500" stroke-dasharray="2 1" d="M3 7h9M3 9.500h9M3 12h9M8 3.500h5"/></svg>
  <div class="ms-auto d-flex align-items-center">
  <button class="vw on" aria-label="普通"><svg width="14" height="13"><path fill="none" stroke="#666" d="M.5.500h13v12H.5zM5 0v13M9.500 0v13M0 4.500h14M0 8.500h14"/></svg></button>
  <button class="vw" aria-label="页面布局"><svg width="14" height="13"><path fill="none" stroke="#666" d="M.5.500h13v12H.5zM3.500 2.500h7v8h-7zM5 4.500h4M5 6.500h4M5 8.500h4"/></svg></button>
  <button class="vw" aria-label="分页预览"><svg width="14" height="13"><path fill="none" stroke="#666" d="M.5.500h13v12H.5zM4.500 0v7.500h5V0M7 0v7"/></svg></button>
  <button class="ps-1" aria-label="缩小"><svg width="8" height="8"><path stroke="#555" stroke-width="2" d="M0 4h7"/></svg></button>
  <input class="zoomer" type="range" min="10" max="200" value="86" aria-label="缩放">
  <button aria-label="放大"><svg width="8" height="8"><path stroke="#555" stroke-width="2" d="M0 4h8M4 0v8"/></svg></button>
  <span class="pct">80%</span>
  </div>
 </footer>

 <div class="brand d-flex align-items-center">
  <svg width="44" height="42" viewBox="0 0 44 42">
   <defs><linearGradient id="lg1" x1="1" y1="0" x2="0" y2="1"><stop offset="0" stop-color="#2fa4dd"/><stop offset="1" stop-color="#4a7fc4"/></linearGradient><linearGradient id="lg2" x1="1" y1="0" x2="0" y2="1"><stop offset="0" stop-color="#3fae6a"/><stop offset="1" stop-color="#d8df4a"/></linearGradient></defs>
   <path fill="url(#lg1)" d="M36 2Q12 2 3 19q-3 9 4 12 6 2 12-1-8 0-8-6Q14 8 36 2z"/>
   <path fill="url(#lg2)" d="M6 41q30 2 35-19 1-7-6-8-9 0-13 7 9-3 11 2Q30 37 6 41z"/>
   <path fill="#6b9bd0" d="M14 26q5 4 10 0 3-3 0-5 7-2 7 2-1 6-9 7-6 0-8-4z"/>
  </svg>
  <div><div class="brand-cn">极光下载站</div><div class="brand-url">www.xz7.com</div></div>
 </div>
</div>
<script src="https://cdn.jsdelivr.net/npm/bootstrap@5.3.0/dist/js/bootstrap.bundle.min.js"></script>
<script>
const widths = [23,129,68,68,68,36,70,82,77,19,19,19,19,19,19,19,36,69,38,87,87,114,114,114,111,111];
const letters = 'ABCDEFGHIJKLMNOPQRSTUVWXY'.split('');
const data = {59:['日期','编号','产品','数量'],60:['2023/3/24',1,'香蕉',4],61:['2023/3/24',2,'梨',6],62:['2023/3/24',3,'苹果',5],
  63:['2023/3/25',4,'葡萄',2],64:['2023/3/25',5,'西瓜',8],65:['2023/3/25',6,'荔枝',2],66:['2023/3/28',7,'哈密瓜',9],
  67:['2023/3/28',8,'橘子',1],68:['2023/3/28',9,'樱桃',9],69:['2023/3/28',10,'车厘子',7]};
const pivot = {59:['hd','行标签<span class="drop"><span class="caret"></span></span>','求和项:数量'],60:['sum','2023/3/24','15'],
  61:['item','梨','6'],62:['item','苹果','5'],63:['item','香蕉','4'],64:['sum','2023/3/25','12'],65:['item','荔枝','2'],
  66:['item','葡萄','2'],67:['item','西瓜','8'],68:['sum','2023/3/28','26'],69:['item','车厘子','7'],70:['item','哈密瓜','9'],
  71:['item','橘子','1'],72:['item pretot','樱桃','9'],73:['tot','总计','53']};
const short = [60,61,62,77,78,79];
let html = '<colgroup>' + widths.map(w => `<col style="width:${w}px">`).join('') + '</colgroup><thead><tr><th><svg width="10" height="10" class="ms-auto"><path fill="#b4b4b4" d="M10 0v10H0z"/></svg></th>' +
  letters.map(l => `<th${l === 'H' ? ' class="sel"' : ''}>${l}</th>`).join('') + '</tr></thead><tbody>';
for (let r = 58; r <= 81; r++) {
  html += `<tr class="${short.includes(r) ? 'h25' : 'h33'}"><th${r === 60 ? ' class="sel"' : ''}>${r}</th>`;
  letters.forEach((l, c) => {
    const p = pivot[r];
    if (c < 4 && data[r]) html += `<td${c === 2 || r === 59 ? ' class="zh"' : ''}>${data[r][c]}</td>`;
    else if (l === 'G' && p) html += `<td class="pv ${p[0]}">${p[0] === 'sum' ? '<span class="exp"></span>' : ''}${p[1]}</td>`;
    else if (l === 'H' && p) html += `<td class="pv ${p[0]} ${p[0] === 'hd' ? '' : 'rt'}${r === 60 ? ' pick' : ''}">${p[2]}</td>`;
    else html += '<td></td>';
  });
  html += '</tr>';
}
document.getElementById('grid').innerHTML = html + '</tbody>';
</script>
</body>
</html>
